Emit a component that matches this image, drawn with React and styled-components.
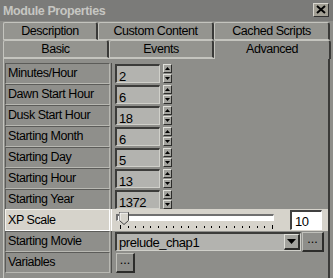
import styled, { createGlobalStyle } from "styled-components";

const GlobalStyle = createGlobalStyle`
  html, body {
    margin: 0;
    padding: 0;
    background: #8e8e8a;
  }
  body {
    font-family: "Liberation Sans", Arial, sans-serif;
    font-size: 12.5px;
    letter-spacing: -0.45px;
    color: #000;
  }
`;

const rows = [
    ["Minutes/Hour", "2"],
    ["Dawn Start Hour", "6"],
    ["Dusk Start Hour", "18"],
    ["Starting Month", "6"],
    ["Starting Day", "5"],
    ["Starting Hour", "13"],
    ["Starting Year", "1372"],
];

const backTabs = [
    ["Description", 95],
    ["Custom Content", 116],
    ["Cached Scripts", 116],
];

const frontTabs = [
    ["Basic", 106, false],
    ["Events", 105, false],
    ["Advanced", 117, true],
];

const Arrow = ({ up }) => (
    <svg width="5" height="3" viewBox="0 0 5 3">
        <path d={up ? "M2.5 0 L5 3 L0 3 Z" : "M0 0 L5 0 L2.5 3 Z"} fill="#000" />
    </svg>
);

const Slider = () => {
    const ticks = Array.from({ length: 21 }, (_, i) => 4 + i * 7.6);
    return (
        <SliderBox>
            <Track>
                <Thumb width="10" height="13" viewBox="0 0 10 13">
                    <path d="M0.5 0.5 H9.5 V8.5 L5 12.5 L0.5 8.5 Z" fill="#d6d3cb" stroke="#404040" />
                    <path d="M1 1 H9 M1 1 V8.5" stroke="#fff" />
                </Thumb>
            </Track>
            <svg width="158" height="5" viewBox="0 0 158 5">
                {ticks.map((x, i) => (
                    <rect key={i} x={Math.round(x)} y={i === 0 || i === 20 ? 0 : 1} width="1" height={i === 0 || i === 20 ? 4 : 2} fill="#000" />
                ))}
            </svg>
        </SliderBox>
    );
};

const App = () => {
    return (
        <Window>
            <GlobalStyle />
            <TitleBar>
                <Title>Module Properties</Title>
                <CloseButton>
                    <svg width="10" height="9" viewBox="0 0 10 9">
                        <path d="M1 1 L9 8 M9 1 L1 8" stroke="#000" strokeWidth="2" />
                    </svg>
                </CloseButton>
            </TitleBar>

            <TabStrip>
                <TabRow>
                    {backTabs.map(([name, w]) => (
                        <Tab key={name} $w={w}>{name}</Tab>
                    ))}
                </TabRow>
                <TabRow>
                    {frontTabs.map(([name, w, active]) => (
                        <Tab key={name} $w={w} $active={active}>{name}</Tab>
                    ))}
                </TabRow>
            </TabStrip>

            <Panel>
                <PropList>
                    {rows.map(([label, value]) => (
                        <PropRow key={label}>
                            <Label>{label}</Label>
                            <ValueCell>
                                <NumberEdit>{value}</NumberEdit>
                                <Spinner>
                                    <SpinButton><Arrow up /></SpinButton>
                                    <SpinButton><Arrow /></SpinButton>
                                </Spinner>
                            </ValueCell>
                        </PropRow>
                    ))}

                    <PropRow $highlight>
                        <Label $highlight>XP Scale</Label>
                        <ValueCell $highlight>
                            <Slider />
                            <WhiteEdit>10</WhiteEdit>
                        </ValueCell>
                    </PropRow>

                    <PropRow>
                        <Label>Starting Movie</Label>
                        <ValueCell>
                            <Combo>
                                <ComboText>prelude_chap1</ComboText>
                                <DropButton><svg width="9" height="5" viewBox="0 0 9 5"><path d="M0 0 H9 L4.5 5 Z" fill="#000" /></svg></DropButton>
                            </Combo>
                            <DotsButton $w={22}>...</DotsButton>
                        </ValueCell>
                    </PropRow>

                    <PropRow>
                        <Label>Variables</Label>
                        <ValueCell>
                            <DotsButton $w={19}>...</DotsButton>
                        </ValueCell>
                    </PropRow>
                </PropList>
            </Panel>
        </Window>
    );
};

export default App;

const Window = styled.div`
    width: 333px;
    height: 278px;
    overflow: hidden;
    display: flex;
    flex-direction: column;
    background: #8e8e8a;
`

const TitleBar = styled.div`
    height: 21px;
    flex: none;
    display: flex;
    align-items: center;
    justify-content: space-between;
    padding: 0 4px 0 3px;
    background: #7b7b79;
    box-sizing: border-box;
`

const Title = styled.div`
    font-weight: bold;
    font-size: 12.5px;
    letter-spacing: -0.4px;
    color: #c6c6c2;
`

const CloseButton = styled.div`
    width: 16px;
    height: 14px;
    box-sizing: border-box;
    display: flex;
    align-items: center;
    justify-content: center;
    background: #a29f94;
    border: 1px solid;
    border-color: #d8d6cf #303030 #303030 #d8d6cf;
    margin-top: -2px;
`

const TabStrip = styled.div`
    flex: none;
    padding: 1px 0 0 3px;
    position: relative;
    z-index: 1;
`

const TabRow = styled.div`
    display: flex;
    height: 18px;
`

const Tab = styled.div`
    width: ${p => p.$w}px;
    height: ${p => (p.$active ? 19 : 18)}px;
    box-sizing: border-box;
    display: flex;
    align-items: center;
    justify-content: center;
    background: ${p => (p.$active ? "#8e8e8a" : "#94948f")};
    border-top: 1px solid #c4c4be;
    border-left: 1px solid #c4c4be;
    border-right: 2px solid #3a3a38;
    border-bottom: ${p => (p.$active ? "none" : "1px solid #c4c4be")};
    border-radius: 2px 3px 0 0;
    padding-bottom: ${p => (p.$active ? 3 : 1)}px;
`

const Panel = styled.div`
    flex: 1;
    margin-left: 3px;
    width: 327px;
    box-sizing: border-box;
    border-top: 1px solid #c4c4be;
    border-left: 1px solid #c4c4be;
    border-right: 2px solid #3a3a38;
    padding: 4px 0 0 1px;
`

const PropList = styled.div`
    display: flex;
    flex-direction: column;
`

const PropRow = styled.div`
    display: flex;
    height: ${p => (p.$highlight ? 22 : 21)}px;
    background: ${p => (p.$highlight ? "#d6d3cb" : "transparent")};
    margin-top: ${p => (p.$highlight ? -1 : 0)}px;
`

const Label = styled.div`
    width: 105px;
    flex: none;
    box-sizing: border-box;
    padding: ${p => (p.$highlight ? "3px 0 0 2px" : "2px 0 0 2px")};
    border: 1px solid;
    border-color: ${p => (p.$highlight ? "#f4f2ec #ffffff #ffffff #f4f2ec" : "#5c5c59 #b8b8b2 #b8b8b2 #5c5c59")};
    background: ${p => (p.$highlight ? "#d6d3cb" : "#8f8f8b")};
    white-space: nowrap;
    overflow: hidden;
`

const ValueCell = styled.div`
    flex: 1;
    display: flex;
    align-items: ${p => (p.$highlight ? "center" : "flex-start")};
    margin-left: 1px;
    border-left: 1px solid ${p => (p.$highlight ? "#ffffff" : "#4e4e4b")};
    padding-left: 3px;
    padding-right: 6px;
`

const NumberEdit = styled.div`
    width: 45px;
    height: 19px;
    margin-top: 1px;
    box-sizing: border-box;
    padding: 3px 0 0 2px;
    background: #b3b3af;
    border: 2px solid;
    border-color: #3c3c3a #d0d0ca #d0d0ca #3c3c3a;
    border-width: 2px 1px 1px 2px;
    font-size: 13px;
`

const Spinner = styled.div`
    display: flex;
    flex-direction: column;
    margin-left: 3px;
    margin-top: 1px;
    gap: 1px;
`

const SpinButton = styled.div`
    width: 9px;
    height: 9px;
    box-sizing: border-box;
    display: flex;
    align-items: center;
    justify-content: center;
    background: #a3a39e;
    border: 1px solid;
    border-color: #e0e0da #2c2c2a #2c2c2a #e0e0da;
`

const SliderBox = styled.div`
    display: flex;
    flex-direction: column;
    gap: 4px;
    margin-left: 1px;
    margin-top: 4px;
`

const Track = styled.div`
    width: 158px;
    height: 7px;
    box-sizing: border-box;
    position: relative;
    background: #fff;
    border: 1px solid;
    border-color: #707070 #ffffff #ffffff #707070;
    border-width: 2px 1px 1px 2px;
`

const Thumb = styled.svg`
    position: absolute;
    left: 1px;
    top: -4px;
`

const WhiteEdit = styled.div`
    width: 32px;
    height: 20px;
    margin-left: auto;
    box-sizing: border-box;
    padding: 2px 0 0 3px;
    background: #fff;
    border: 1px solid;
    border-color: #404040 #ffffff #ffffff #404040;
    border-width: 2px 1px 1px 2px;
    font-size: 13px;
`

const Combo = styled.div`
    width: 186px;
    height: 19px;
    margin-top: 1px;
    box-sizing: border-box;
    display: flex;
    align-items: center;
    background: #b3b3af;
    border: 1px solid;
    border-color: #3c3c3a #d0d0ca #d0d0ca #3c3c3a;
    border-width: 2px 1px 1px 2px;
`

const ComboText = styled.div`
    flex: 1;
    padding-left: 2px;
    font-size: 13px;
`

const DropButton = styled.div`
    width: 16px;
    height: 16px;
    box-sizing: border-box;
    display: flex;
    align-items: center;
    justify-content: center;
    background: #a3a39e;
    border: 1px solid;
    border-color: #e0e0da #2c2c2a #2c2c2a #e0e0da;
    border-width: 1px 2px 2px 1px;
`

const DotsButton = styled.div`
    width: ${p => p.$w}px;
    height: 20px;
    margin-left: 1px;
    margin-top: 1px;
    box-sizing: border-box;
    display: flex;
    align-items: flex-end;
    justify-content: center;
    padding-bottom: 4px;
    background: #8e8e8a;
    border: 1px solid;
    border-color: #c0c0ba #2c2c2a #2c2c2a #c0c0ba;
    border-width: 1px 2px 2px 1px;
    letter-spacing: 0;
`
